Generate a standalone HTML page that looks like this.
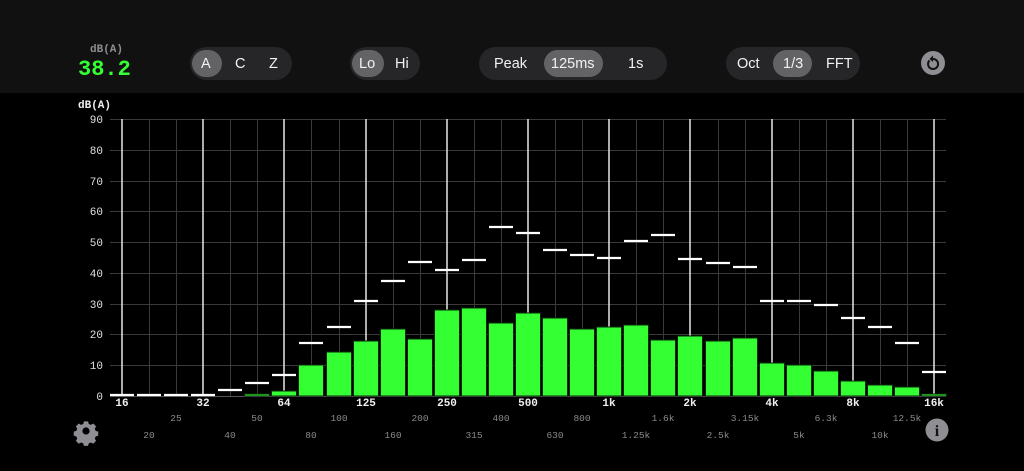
<!DOCTYPE html>
<html><head><meta charset="utf-8"><style>
body{margin:0;width:1024px;height:471px;background:#000;overflow:hidden;font-family:"Liberation Sans",sans-serif}
.top{position:absolute;left:0;top:0;width:1024px;height:93px;background:#111112}
.pill{position:absolute;top:47px;height:33px;border-radius:17px;background:#262628}
.sel{position:absolute;top:50px;height:27px;border-radius:14px;background:#636366}
.t{position:absolute;top:56px;color:#f2f2f2;font-size:14.5px;line-height:17px}
.mono{font-family:"Liberation Mono","DejaVu Sans Mono",monospace}
</style></head><body>
<div class="top"></div>
<div class="mono" style="position:absolute;left:90px;top:44px;color:#8e8e93;font-size:11px;font-weight:bold">dB(A)</div>
<div class="mono" style="position:absolute;left:78px;top:57px;color:#33ff33;font-size:22px;font-weight:bold">38.2</div>

<div class="pill" style="left:190px;width:102px"></div>
<div class="sel" style="left:192px;width:30px;border-radius:15px"></div>
<div class="t" style="left:201px">A</div><div class="t" style="left:235px">C</div><div class="t" style="left:269px">Z</div>

<div class="pill" style="left:350px;width:70px"></div>
<div class="sel" style="left:352px;width:32px"></div>
<div class="t" style="left:359px">Lo</div><div class="t" style="left:395px">Hi</div>

<div class="pill" style="left:479px;width:188px"></div>
<div class="sel" style="left:544px;width:59px"></div>
<div class="t" style="left:494px">Peak</div><div class="t" style="left:551px">125ms</div><div class="t" style="left:628px">1s</div>

<div class="pill" style="left:726px;width:134px"></div>
<div class="sel" style="left:773px;width:39px"></div>
<div class="t" style="left:737px">Oct</div><div class="t" style="left:783px">1/3</div><div class="t" style="left:826px">FFT</div>

<svg style="position:absolute;left:0;top:0" width="1024" height="471">
<circle cx="933" cy="63" r="12" fill="#8e8e93"/>
<path d="M929.5 60.5 A5 5 0 1 0 933 59" fill="none" stroke="#111" stroke-width="2"/>
<path d="M933 55.5 L929.5 59 L933 62 Z" fill="#111"/>

<g font-family="Liberation Mono,DejaVu Sans Mono,monospace" font-size="11" fill="#e0e0e0" text-anchor="end">
<text x="103" y="123">90</text><text x="103" y="154">80</text><text x="103" y="185">70</text><text x="103" y="215">60</text><text x="103" y="246">50</text><text x="103" y="277">40</text><text x="103" y="308">30</text><text x="103" y="338">20</text><text x="103" y="369">10</text><text x="103" y="400">0</text>
</g>
<text x="78" y="108" font-family="Liberation Mono,monospace" font-size="11" font-weight="bold" fill="#f0f0f0">dB(A)</text>

<g stroke="#3a3a3a" stroke-width="1">
<path d="M110 119.5H946M110 150.5H946M110 181.5H946M110 211.5H946M110 242.5H946M110 273.5H946M110 304.5H946M110 334.5H946M110 365.5H946"/>
<path d="M149.5 119V396M176.5 119V396M230.5 119V396M257.5 119V396M311.5 119V396M339.5 119V396M393.5 119V396M420.5 119V396M474.5 119V396M501.5 119V396M555.5 119V396M582.5 119V396M636.5 119V396M663.5 119V396M718.5 119V396M745.5 119V396M799.5 119V396M826.5 119V396M880.5 119V396M907.5 119V396"/>
</g>
<g stroke="#e8e8e8" stroke-width="1.5">
<path d="M122 119V396M203 119V396M284 119V396M366 119V396M447 119V396M528 119V396M609 119V396M690 119V396M772 119V396M853 119V396M934 119V396"/>
</g>
<path d="M110 396.5H946" stroke="#555" stroke-width="1"/>

<g fill="#33ff33" stroke="#0a2a0a" stroke-width="1">
<rect x="244.5" y="394" width="25" height="2"/>
<rect x="271.5" y="391" width="25" height="5"/>
<rect x="298.5" y="365" width="25" height="31"/>
<rect x="326.5" y="352" width="25" height="44"/>
<rect x="353.5" y="341" width="25" height="55"/>
<rect x="380.5" y="329" width="25" height="67"/>
<rect x="407.5" y="339" width="25" height="57"/>
<rect x="434.5" y="310" width="25" height="86"/>
<rect x="461.5" y="308" width="25" height="88"/>
<rect x="488.5" y="323" width="25" height="73"/>
<rect x="515.5" y="313" width="25" height="83"/>
<rect x="542.5" y="318" width="25" height="78"/>
<rect x="569.5" y="329" width="25" height="67"/>
<rect x="596.5" y="327" width="25" height="69"/>
<rect x="623.5" y="325" width="25" height="71"/>
<rect x="650.5" y="340" width="25" height="56"/>
<rect x="677.5" y="336" width="25" height="60"/>
<rect x="705.5" y="341" width="25" height="55"/>
<rect x="732.5" y="338" width="25" height="58"/>
<rect x="759.5" y="363" width="25" height="33"/>
<rect x="786.5" y="365" width="25" height="31"/>
<rect x="813.5" y="371" width="25" height="25"/>
<rect x="840.5" y="381" width="25" height="15"/>
<rect x="867.5" y="385" width="25" height="11"/>
<rect x="894.5" y="387" width="25" height="9"/>
<rect x="921.5" y="394" width="25" height="2"/>
</g>

<g stroke="#fff" stroke-width="2.2">
<path d="M110 395h24M137 395h24M164 395h24M191 395h24M218 390h24M245 383h24M272 375h24M299 343h24M327 327h24M354 301h24M381 281h24M408 262h24M435 270h24M462 260h24M489 227h24M516 233h24M543 250h24M570 255h24M597 258h24M624 241h24M651 235h24M678 259h24M706 263h24M733 267h24M760 301h24M787 301h24M814 305h24M841 318h24M868 327h24M895 343h24M922 372h24"/>
</g>

<g font-family="Liberation Mono,DejaVu Sans Mono,monospace" font-size="11" font-weight="bold" fill="#f0f0f0" text-anchor="middle">
<text x="122" y="406">16</text><text x="203" y="406">32</text><text x="284" y="406">64</text><text x="366" y="406">125</text><text x="447" y="406">250</text><text x="528" y="406">500</text><text x="609" y="406">1k</text><text x="690" y="406">2k</text><text x="772" y="406">4k</text><text x="853" y="406">8k</text><text x="934" y="406">16k</text>
</g>
<g font-family="Liberation Mono,DejaVu Sans Mono,monospace" font-size="9.5" fill="#8a8a8a" text-anchor="middle">
<text x="176" y="421">25</text><text x="257" y="421">50</text><text x="339" y="421">100</text><text x="420" y="421">200</text><text x="501" y="421">400</text><text x="582" y="421">800</text><text x="663" y="421">1.6k</text><text x="745" y="421">3.15k</text><text x="826" y="421">6.3k</text><text x="907" y="421">12.5k</text>
<text x="149" y="438">20</text><text x="230" y="438">40</text><text x="311" y="438">80</text><text x="393" y="438">160</text><text x="474" y="438">315</text><text x="555" y="438">630</text><text x="636" y="438">1.25k</text><text x="718" y="438">2.5k</text><text x="799" y="438">5k</text><text x="880" y="438">10k</text>
</g>

<g transform="translate(86,431) scale(0.8)" fill="#8e8e93">
<path d="M-2.5 -12h5l1 3.2 2.6 1.1 3-1.6 3.5 3.5-1.6 3 1.1 2.6 3.2 1v5l-3.2 1-1.1 2.6 1.6 3-3.5 3.5-3-1.6-2.6 1.1-1 3.2h-5l-1-3.2-2.6-1.1-3 1.6-3.5-3.5 1.6-3-1.1-2.6-3.2-1v-5l3.2-1 1.1-2.6-1.6-3 3.5-3.5 3 1.6 2.6-1.1z"/>
<circle r="4.5" fill="#000"/>
</g>
<circle cx="937" cy="430" r="11.5" fill="#8e8e93"/>
<text x="937" y="436" font-family="Liberation Serif,serif" font-weight="bold" font-size="16" fill="#111" text-anchor="middle">i</text>
</svg>
</body></html>
